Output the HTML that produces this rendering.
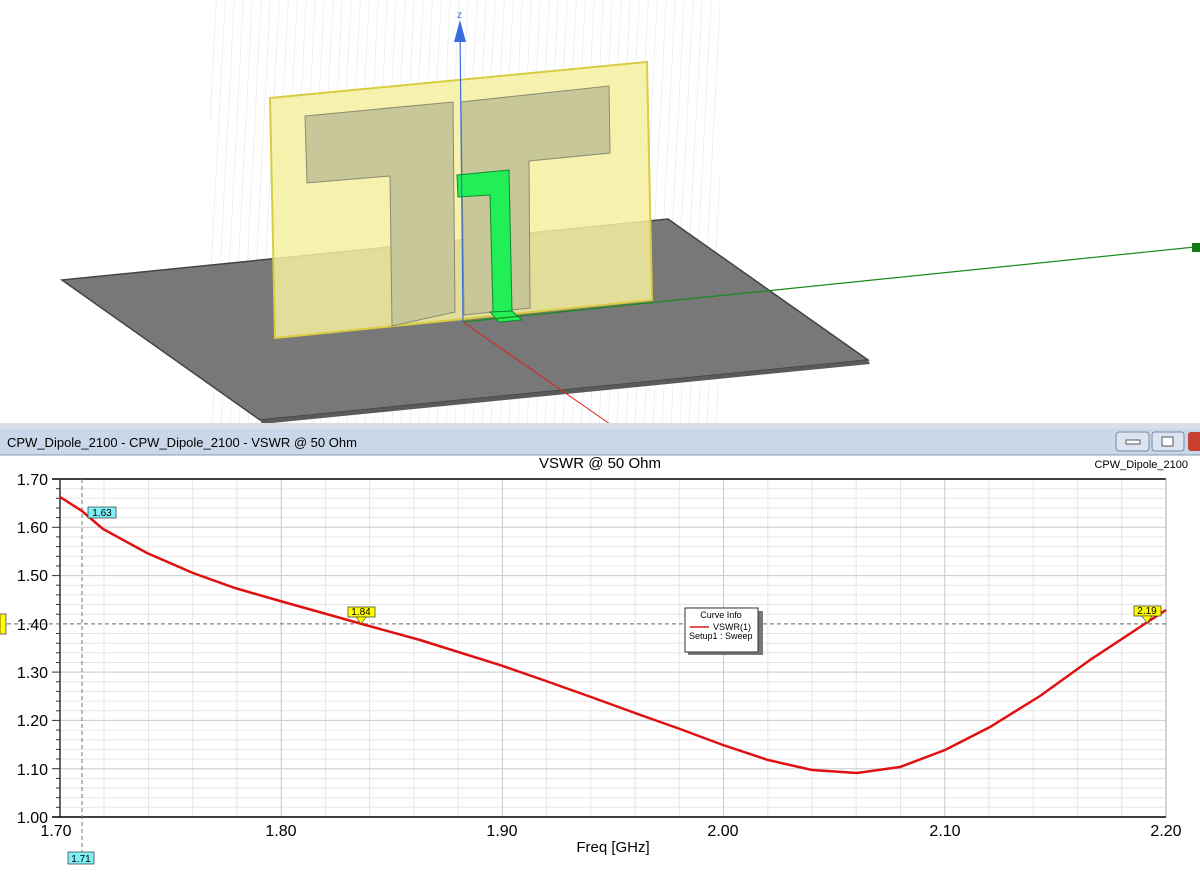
<!DOCTYPE html>
<html><head><meta charset="utf-8"><style>
body{margin:0;width:1200px;height:869px;overflow:hidden;background:#fff;font-family:"Liberation Sans",sans-serif}
</style></head><body>
<svg width="1200" height="869" viewBox="0 0 1200 869" xmlns="http://www.w3.org/2000/svg" font-family="Liberation Sans, sans-serif">
<defs>
<pattern id="g3" width="9" height="869" patternUnits="userSpaceOnUse" patternTransform="skewX(-3)">
<line x1="0" y1="0" x2="0" y2="869" stroke="#d6dae6" stroke-width="1"/></pattern>
</defs>
<rect x="0" y="0" width="1200" height="424" fill="#fff"/>
<rect x="210" y="0" width="510" height="424" fill="url(#g3)" opacity="0.8"/>
<polygon points="62,280 668,219 868,360 260,420" fill="#787878" stroke="#444" stroke-width="1.5"/>
<polygon points="260,420 868,360 870,364 262,424" fill="#5a5a5a"/>
<line x1="463" y1="322" x2="610" y2="424" stroke="#e02020" stroke-width="1"/>
<polygon points="270,98 647,62 652,300 275,338" fill="#f5f0a0" fill-opacity="0.85" stroke="#d8cc40" stroke-width="2"/>
<polygon points="305,116 453,102 455,312 392,326 390,176 307,183" fill="#c8c79a" stroke="#8a8a70" stroke-width="1"/>
<polygon points="461,102 609,86 610,153 529,161 530,308 464,315" fill="#c8c79a" stroke="#8a8a70" stroke-width="1"/>
<polygon points="457,175 509,170 512,312 493,313 490,195 458,197" fill="#22ee55" stroke="#118833" stroke-width="1"/>
<polygon points="490,312 512,311 522,320 499,322" fill="#22ee55" stroke="#118833" stroke-width="1"/>
<line x1="463" y1="322" x2="1195" y2="247" stroke="#1a8a1a" stroke-width="1.2"/>
<rect x="1192" y="243" width="8" height="9" fill="#127a12"/>
<line x1="460" y1="30" x2="463" y2="322" stroke="#3a6ee0" stroke-width="1.2"/>
<polygon points="460,20 454,42 466,42" fill="#3a6ee0"/>
<text x="457" y="18" font-size="10" fill="#3a6ee0">z</text>
<rect x="0" y="423" width="1200" height="6" fill="#d8dde6"/>
<rect x="0" y="429" width="1200" height="26" fill="#c9d7e8"/>
<line x1="0" y1="455" x2="1200" y2="455" stroke="#8898b0"/>
<text x="7" y="447" font-size="13" fill="#000">CPW_Dipole_2100 - CPW_Dipole_2100 - VSWR @ 50 Ohm</text>
<rect x="1116" y="432" width="33" height="19" rx="3" fill="#dbe4f0" stroke="#7a8aa0"/>
<rect x="1126" y="440" width="14" height="4" fill="#fff" stroke="#556"/>
<rect x="1152" y="432" width="32" height="19" rx="3" fill="#dbe4f0" stroke="#7a8aa0"/>
<rect x="1162" y="437" width="11" height="9" fill="#fff" stroke="#556"/>
<rect x="1188" y="432" width="14" height="19" rx="3" fill="#c84030"/>
<rect x="0" y="456" width="1200" height="413" fill="#fff"/>
<text x="600" y="468" font-size="15" text-anchor="middle">VSWR @ 50 Ohm</text>
<text x="1188" y="468" font-size="11" text-anchor="end">CPW_Dipole_2100</text>
<g stroke="#e6e6e6" stroke-width="1">
<line x1="60" y1="488.7" x2="1166" y2="488.7"/><line x1="60" y1="498.3" x2="1166" y2="498.3"/><line x1="60" y1="508" x2="1166" y2="508"/><line x1="60" y1="517.6" x2="1166" y2="517.6"/>
<line x1="60" y1="536.9" x2="1166" y2="536.9"/><line x1="60" y1="546.6" x2="1166" y2="546.6"/><line x1="60" y1="556.3" x2="1166" y2="556.3"/><line x1="60" y1="565.9" x2="1166" y2="565.9"/>
<line x1="60" y1="585.2" x2="1166" y2="585.2"/><line x1="60" y1="594.9" x2="1166" y2="594.9"/><line x1="60" y1="604.5" x2="1166" y2="604.5"/><line x1="60" y1="614.2" x2="1166" y2="614.2"/>
<line x1="60" y1="633.5" x2="1166" y2="633.5"/><line x1="60" y1="643.2" x2="1166" y2="643.2"/><line x1="60" y1="652.8" x2="1166" y2="652.8"/><line x1="60" y1="662.5" x2="1166" y2="662.5"/>
<line x1="60" y1="681.8" x2="1166" y2="681.8"/><line x1="60" y1="691.4" x2="1166" y2="691.4"/><line x1="60" y1="701.1" x2="1166" y2="701.1"/><line x1="60" y1="710.8" x2="1166" y2="710.8"/>
<line x1="60" y1="730.1" x2="1166" y2="730.1"/><line x1="60" y1="739.7" x2="1166" y2="739.7"/><line x1="60" y1="749.4" x2="1166" y2="749.4"/><line x1="60" y1="759" x2="1166" y2="759"/>
<line x1="60" y1="778.4" x2="1166" y2="778.4"/><line x1="60" y1="788" x2="1166" y2="788"/><line x1="60" y1="797.7" x2="1166" y2="797.7"/><line x1="60" y1="807.3" x2="1166" y2="807.3"/>
<line x1="104" y1="479" x2="104" y2="817"/><line x1="148.5" y1="479" x2="148.5" y2="817"/><line x1="192.7" y1="479" x2="192.7" y2="817"/><line x1="237" y1="479" x2="237" y2="817"/>
<line x1="325.4" y1="479" x2="325.4" y2="817"/><line x1="369.6" y1="479" x2="369.6" y2="817"/><line x1="413.9" y1="479" x2="413.9" y2="817"/><line x1="458.1" y1="479" x2="458.1" y2="817"/>
<line x1="546.6" y1="479" x2="546.6" y2="817"/><line x1="590.8" y1="479" x2="590.8" y2="817"/><line x1="635" y1="479" x2="635" y2="817"/><line x1="679.3" y1="479" x2="679.3" y2="817"/>
<line x1="767.8" y1="479" x2="767.8" y2="817"/><line x1="812" y1="479" x2="812" y2="817"/><line x1="856.2" y1="479" x2="856.2" y2="817"/><line x1="900.5" y1="479" x2="900.5" y2="817"/>
<line x1="989" y1="479" x2="989" y2="817"/><line x1="1033.2" y1="479" x2="1033.2" y2="817"/><line x1="1077.4" y1="479" x2="1077.4" y2="817"/><line x1="1121.7" y1="479" x2="1121.7" y2="817"/>
</g>
<g stroke="#c8c8c8" stroke-width="1">
<line x1="60" y1="527.3" x2="1166" y2="527.3"/><line x1="60" y1="575.6" x2="1166" y2="575.6"/><line x1="60" y1="672.1" x2="1166" y2="672.1"/><line x1="60" y1="720.4" x2="1166" y2="720.4"/><line x1="60" y1="768.7" x2="1166" y2="768.7"/>
<line x1="281.2" y1="479" x2="281.2" y2="817"/><line x1="502.4" y1="479" x2="502.4" y2="817"/><line x1="723.6" y1="479" x2="723.6" y2="817"/><line x1="944.8" y1="479" x2="944.8" y2="817"/>
</g>
<g stroke="#333" stroke-width="1">
<line x1="56" y1="488.7" x2="60" y2="488.7"/><line x1="56" y1="498.3" x2="60" y2="498.3"/><line x1="56" y1="508" x2="60" y2="508"/><line x1="56" y1="517.6" x2="60" y2="517.6"/>
<line x1="56" y1="536.9" x2="60" y2="536.9"/><line x1="56" y1="546.6" x2="60" y2="546.6"/><line x1="56" y1="556.3" x2="60" y2="556.3"/><line x1="56" y1="565.9" x2="60" y2="565.9"/>
<line x1="56" y1="585.2" x2="60" y2="585.2"/><line x1="56" y1="594.9" x2="60" y2="594.9"/><line x1="56" y1="604.5" x2="60" y2="604.5"/><line x1="56" y1="614.2" x2="60" y2="614.2"/>
<line x1="56" y1="633.5" x2="60" y2="633.5"/><line x1="56" y1="643.2" x2="60" y2="643.2"/><line x1="56" y1="652.8" x2="60" y2="652.8"/><line x1="56" y1="662.5" x2="60" y2="662.5"/>
<line x1="56" y1="681.8" x2="60" y2="681.8"/><line x1="56" y1="691.4" x2="60" y2="691.4"/><line x1="56" y1="701.1" x2="60" y2="701.1"/><line x1="56" y1="710.8" x2="60" y2="710.8"/>
<line x1="56" y1="730.1" x2="60" y2="730.1"/><line x1="56" y1="739.7" x2="60" y2="739.7"/><line x1="56" y1="749.4" x2="60" y2="749.4"/><line x1="56" y1="759" x2="60" y2="759"/>
<line x1="56" y1="778.4" x2="60" y2="778.4"/><line x1="56" y1="788" x2="60" y2="788"/><line x1="56" y1="797.7" x2="60" y2="797.7"/><line x1="56" y1="807.3" x2="60" y2="807.3"/>
<line x1="52" y1="527.3" x2="60" y2="527.3"/><line x1="52" y1="575.6" x2="60" y2="575.6"/><line x1="52" y1="672.1" x2="60" y2="672.1"/><line x1="52" y1="720.4" x2="60" y2="720.4"/><line x1="52" y1="768.7" x2="60" y2="768.7"/>
</g>
<line x1="52" y1="479" x2="1166" y2="479" stroke="#000" stroke-width="1.5"/>
<line x1="1166" y1="479" x2="1166" y2="817" stroke="#aaa"/>
<line x1="60" y1="479" x2="60" y2="817" stroke="#333" stroke-width="1.5"/>
<line x1="52" y1="817" x2="1166" y2="817" stroke="#000" stroke-width="1.5"/>
<line x1="0" y1="623.9" x2="1166" y2="623.9" stroke="#666" stroke-dasharray="4,3"/>
<line x1="82" y1="479" x2="82" y2="856" stroke="#777" stroke-dasharray="4,3"/>
<g font-size="16" text-anchor="end">
<text x="48" y="485">1.70</text><text x="48" y="533">1.60</text><text x="48" y="581">1.50</text><text x="48" y="630">1.40</text>
<text x="48" y="678">1.30</text><text x="48" y="726">1.20</text><text x="48" y="775">1.10</text><text x="48" y="823">1.00</text>
</g>
<g font-size="16" text-anchor="middle">
<text x="56" y="836">1.70</text><text x="281" y="836">1.80</text><text x="502" y="836">1.90</text><text x="723" y="836">2.00</text><text x="945" y="836">2.10</text><text x="1166" y="836">2.20</text>
</g>
<text x="613" y="852" font-size="15" text-anchor="middle">Freq [GHz]</text>
<polyline fill="none" stroke="#e01010" stroke-width="2.5" points="60,497 82,511 103,529 147,553 193,573 235,588 280,601 330,615 362,624 420,640 500,665 546,681 591,697 635,713 680,729 723,745 768,760 812,770 857,773 900,767 945,750 990,727 1040,696 1090,660 1140,627 1166,610"/>
<rect x="88" y="507" width="28" height="11" fill="#80f0f8" stroke="#333" stroke-width="0.7"/>
<text x="102" y="516" font-size="10" text-anchor="middle">1.63</text>
<rect x="348" y="607" width="27" height="10" fill="#ffff00" stroke="#333" stroke-width="0.7"/>
<text x="361" y="615" font-size="10" text-anchor="middle">1.84</text>
<polygon points="356,617 366,617 361,624" fill="#ffff00" stroke="#333" stroke-width="0.6"/>
<rect x="1134" y="606" width="27" height="10" fill="#ffff00" stroke="#333" stroke-width="0.7"/>
<text x="1147" y="614" font-size="10" text-anchor="middle">2.19</text>
<polygon points="1142,616 1152,616 1147,623" fill="#ffff00" stroke="#333" stroke-width="0.6"/>
<rect x="68" y="852" width="26" height="12" fill="#80f0f8" stroke="#333" stroke-width="0.7"/>
<text x="81" y="862" font-size="10" text-anchor="middle">1.71</text>
<rect x="0" y="614" width="6" height="20" fill="#ffff00" stroke="#333" stroke-width="0.7"/>
<rect x="688" y="611" width="75" height="44" fill="#777"/>
<rect x="685" y="608" width="73" height="44" fill="#fff" stroke="#333"/>
<text x="721" y="618" font-size="9" text-anchor="middle">Curve Info</text>
<line x1="690" y1="627" x2="709" y2="627" stroke="#d02020" stroke-width="1.5"/>
<text x="713" y="630" font-size="9">VSWR(1)</text>
<text x="689" y="639" font-size="9">Setup1 : Sweep</text>
</svg>
</body></html>
